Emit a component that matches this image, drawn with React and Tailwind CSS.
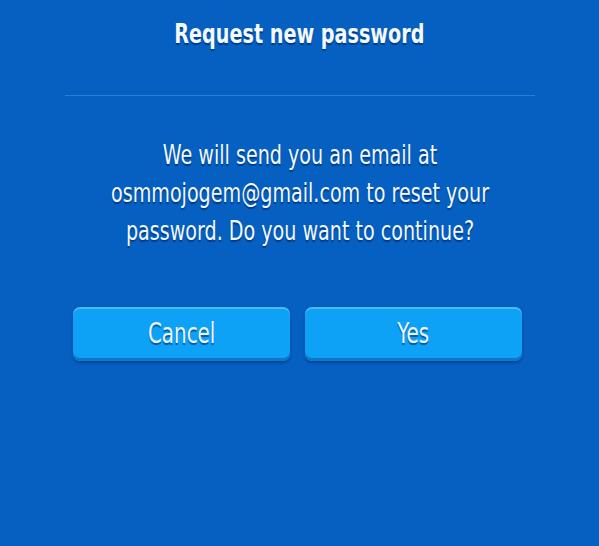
import React from 'react'

const font = { fontFamily: '"DejaVu Sans Condensed", "DejaVu Sans", sans-serif' }

function GameButton({ children }) {
  return (
    <button className="h-[54px] flex-1 rounded-[7px] bg-[#0ea2f6] text-[28px] text-[#eaf6ff] shadow-[inset_0_2px_0_rgba(255,255,255,0.25),inset_0_-3px_0_#0a78cc,0_2px_3px_rgba(0,30,90,0.45)] [text-shadow:0_2px_1px_rgba(0,40,110,0.6)]">
      <span className="inline-block scale-x-[0.79]">{children}</span>
    </button>
  )
}

export default function App() {
  return (
    <div className="min-h-[546px] w-[599px] overflow-hidden bg-[#0560c1] text-[#f2f9ff]" style={font}>
      <div className="flex flex-col items-center">
        <h1 className="scale-x-[0.79] pt-[15px] text-[27px] font-bold leading-[38px] [text-shadow:0_2px_1px_rgba(0,35,100,0.6)]">
          Request new password
        </h1>
        <div className="mt-[42px] h-px w-[470px] bg-[#2a7fd4]" />
        <p className="mt-[40px] w-[600px] shrink-0 scale-x-[0.787] text-center text-[27px] leading-[38px] [text-shadow:0_2px_1px_rgba(0,35,100,0.6)]">
          We will send you an email at osmmojogem@gmail.com to reset your password. Do you want to continue?
        </p>
        <div className="mt-[57px] mr-[4px] flex w-[449px] gap-[15px]">
          <GameButton>Cancel</GameButton>
          <GameButton>Yes</GameButton>
        </div>
      </div>
    </div>
  )
}
